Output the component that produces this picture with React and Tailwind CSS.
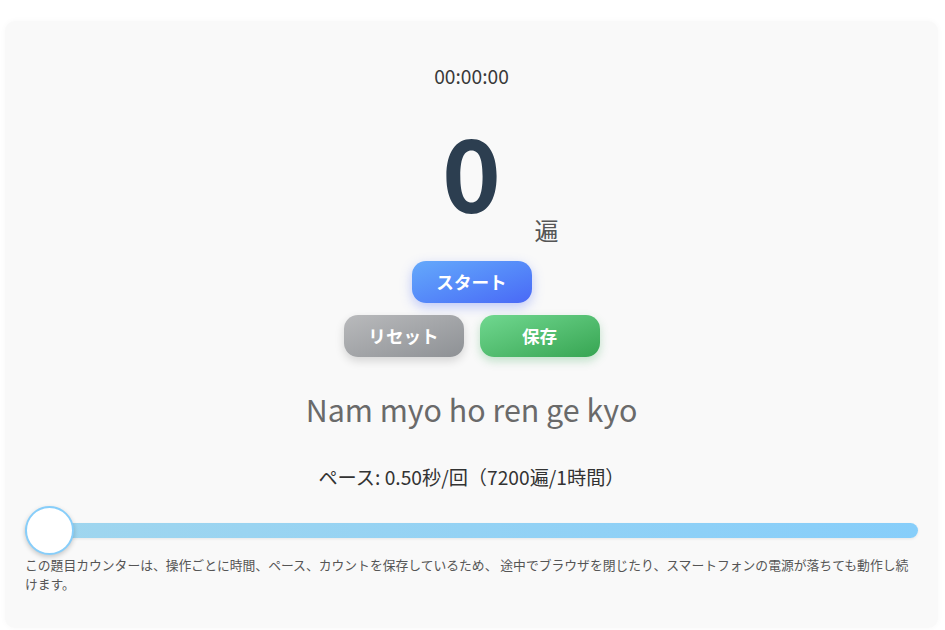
import React from "react";

const font = { fontFamily: '"Noto Sans CJK JP", "Noto Sans", sans-serif' };

export default function App() {
  return (
    <div className="min-h-[630px] bg-white pt-[21px] pl-[5px]" style={font}>
      <div className="w-[933px] rounded-[10px] bg-[#f9f9f9] px-5 pt-[41px] pb-[35px] shadow-[0_0_6px_rgba(0,0,0,0.03)]">
        <div className="text-center text-[19.2px] leading-[28px] text-[#3a3a3a]">00:00:00</div>

        <div className="relative mt-[30px] text-center text-[100px] leading-none font-bold text-[#2c3e50]">
          0
          <span className="absolute left-[calc(50%+63px)] top-[98px] text-[24px] leading-[24px] font-normal text-[#555]">遍</span>
        </div>

        <div className="mt-[41px] flex justify-center">
          <button className="flex h-[42px] w-[120px] items-center justify-center rounded-[14px] bg-gradient-to-br from-[#65a9fb] to-[#4a68f6] text-[17.6px] font-bold text-white shadow-[0_4px_12px_rgba(80,110,245,0.35)]">
            スタート
          </button>
        </div>

        <div className="mt-3 flex justify-center gap-4">
          <button className="flex h-[42px] w-[120px] items-center justify-center rounded-[14px] bg-gradient-to-br from-[#b9babc] to-[#8e9195] text-[17.6px] font-bold text-white shadow-[0_4px_10px_rgba(0,0,0,0.15)]">
            リセット
          </button>
          <button className="flex h-[42px] w-[120px] items-center justify-center rounded-[14px] bg-gradient-to-br from-[#70d890] to-[#36a552] text-[17.6px] font-bold text-white shadow-[0_4px_10px_rgba(60,170,90,0.3)]">
            保存
          </button>
        </div>

        <div className="mt-[28px] text-center text-[30.4px] leading-[48px] text-[#6a6a6a]">Nam myo ho ren ge kyo</div>

        <div className="mt-[30px] text-center text-[19.2px] leading-[28px] text-[#333]">ペース: 0.50秒/回（7200遍/1時間）</div>

        <div className="relative mt-[14px] flex h-[50px] items-center">
          <div className="h-[15px] w-full rounded-full bg-gradient-to-r from-[#a0d6ee] to-[#87cefa] shadow-[0_1px_3px_rgba(0,0,0,0.08)]" />
          <div className="absolute left-0 top-[1px] h-[49px] w-[49px] rounded-full border-2 border-[#87cefa] bg-white shadow-[0_2px_5px_rgba(0,0,0,0.2)]" />
        </div>

        <p className="text-[12.8px] leading-[19.2px] text-[#555]">
          この題目カウンターは、操作ごとに時間、ペース、カウントを保存しているため、 途中でブラウザを閉じたり、スマートフォンの電源が落ちても動作し続けます。
        </p>
      </div>
    </div>
  );
}
